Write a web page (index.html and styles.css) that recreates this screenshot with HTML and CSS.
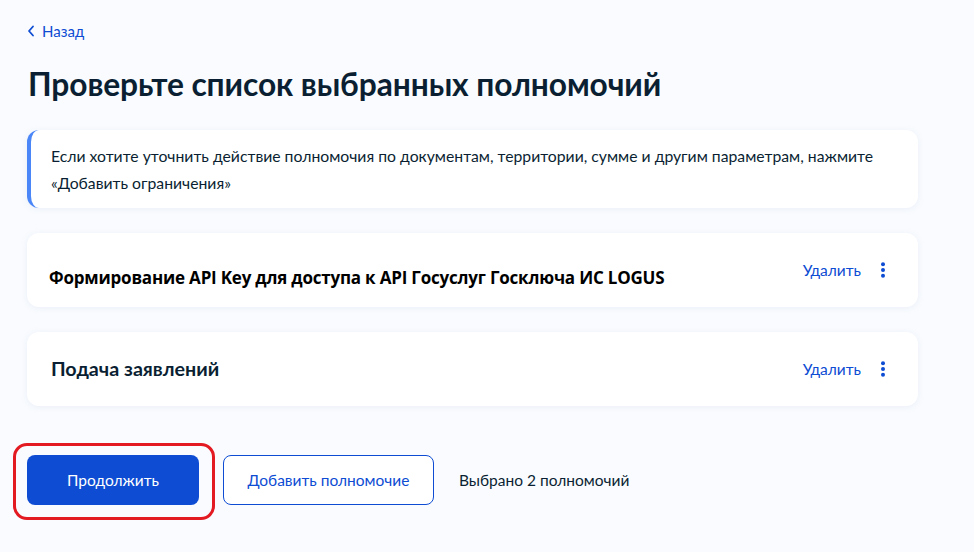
FILE: index.html
```html
<!DOCTYPE html>
<html lang="ru">
<head>
<meta charset="utf-8">
<link rel="stylesheet" href="styles.css">
</head>
<body>
<div class="page">
  <a class="back" href="#">
    <svg class="back-icon" width="8" height="12" viewBox="0 0 8 12"><path d="M6 1.5 L2 6 L6 10.5" fill="none" stroke="#0d4cd3" stroke-width="1.8" stroke-linecap="round" stroke-linejoin="round"/></svg>
    <span>Назад</span>
  </a>
  <h1 class="title">Проверьте список выбранных полномочий</h1>
  <div class="info">Если хотите уточнить действие полномочия по документам, территории, сумме и другим параметрам, нажмите «Добавить ограничения»</div>
  <div class="card card-first">
    <div class="card-title card-title-alt">Формирование API Key для доступа к API Госуслуг Госключа ИС LOGUS</div>
    <div class="actions">
      <a class="del" href="#">Удалить</a>
      <svg class="dots" width="6" height="16" viewBox="0 0 6 16"><circle cx="3" cy="2.2" r="2"/><circle cx="3" cy="8" r="2"/><circle cx="3" cy="13.8" r="2"/></svg>
    </div>
  </div>
  <div class="card">
    <div class="card-title">Подача заявлений</div>
    <div class="actions">
      <a class="del" href="#">Удалить</a>
      <svg class="dots" width="6" height="16" viewBox="0 0 6 16"><circle cx="3" cy="2.2" r="2"/><circle cx="3" cy="8" r="2"/><circle cx="3" cy="13.8" r="2"/></svg>
    </div>
  </div>
  <div class="footer">
    <div class="highlight">
      <button class="btn btn-primary">Продолжить</button>
    </div>
    <button class="btn btn-secondary">Добавить полномочие</button>
    <span class="count">Выбрано 2 полномочий</span>
  </div>
</div>
</body>
</html>
```
FILE: styles.css
```css
* { box-sizing: border-box; }
html, body { margin: 0; padding: 0; }
body {
  background: #f9fbfe;
  font-family: Lato, "Noto Sans", sans-serif;
  color: #0b1f33;
  width: 974px;
  height: 552px;
  overflow: hidden;
}
.page {
  padding: 21px 0 0 27px;
  width: 918px;
}
.back {
  display: inline-flex;
  align-items: center;
  gap: 7px;
  color: #0d4cd3;
  text-decoration: none;
  font-size: 15px;
  line-height: 20px;
}
.back-icon { display: block; }
.title {
  margin: 23px 0 0 1px;
  font-size: 31.75px;
  font-weight: 700;
  line-height: 40px;
  letter-spacing: -0.1px;
}
.info {
  margin-top: 26px;
  background: #fff;
  border-radius: 12px;
  border-left: 4px solid #4a86f7;
  padding: 12px 20px 12px 20px;
  font-size: 15.75px;
  line-height: 27px;
  box-shadow: 0 1px 6px rgba(170, 190, 220, 0.18);
}
.card {
  margin-top: 25px;
  background: #fff;
  border-radius: 12px;
  height: 74px;
  display: flex;
  align-items: center;
  justify-content: space-between;
  padding: 0 32px 0 24px;
  box-shadow: 0 1px 6px rgba(170, 190, 220, 0.18);
}
.card-first { align-items: flex-start; }
.card-title {
  font-size: 19.7px;
  font-weight: 700;
  line-height: 24px;
}
.card-title-alt {
  margin-top: 33px;
  margin-left: -2px;
  font-family: "Open Sans", Lato, sans-serif;
  font-weight: 700;
  font-size: 17px;
  letter-spacing: -0.2px;
  color: #000;
}
.card-first .actions { margin-top: 27px; }
.actions {
  display: flex;
  align-items: center;
  gap: 19px;
}
.del {
  color: #0d4cd3;
  text-decoration: none;
  font-size: 15.5px;
  line-height: 20px;
}
.dots { display: block; fill: #0d4cd3; }
.footer {
  margin-top: 49px;
  display: flex;
  align-items: flex-start;
}
.highlight {
  margin: -12px 0 0 -14px;
  padding: 9px 13px 12px 11px;
  border: 3px solid #e31a22;
  border-radius: 14px;
}
.btn {
  height: 50px;
  border-radius: 8px;
  font-family: Lato, "Noto Sans", sans-serif;
  font-size: 15.5px;
  cursor: pointer;
}
.btn-primary {
  display: block;
  width: 172px;
  background: #0d4cd3;
  color: #fff;
  border: none;
}
.btn-secondary {
  margin-left: 8px;
  width: 211px;
  background: #fff;
  color: #0d4cd3;
  border: 1.5px solid #0d4cd3;
}
.count {
  margin-left: 25px;
  font-size: 15.5px;
  line-height: 50px;
}
```
